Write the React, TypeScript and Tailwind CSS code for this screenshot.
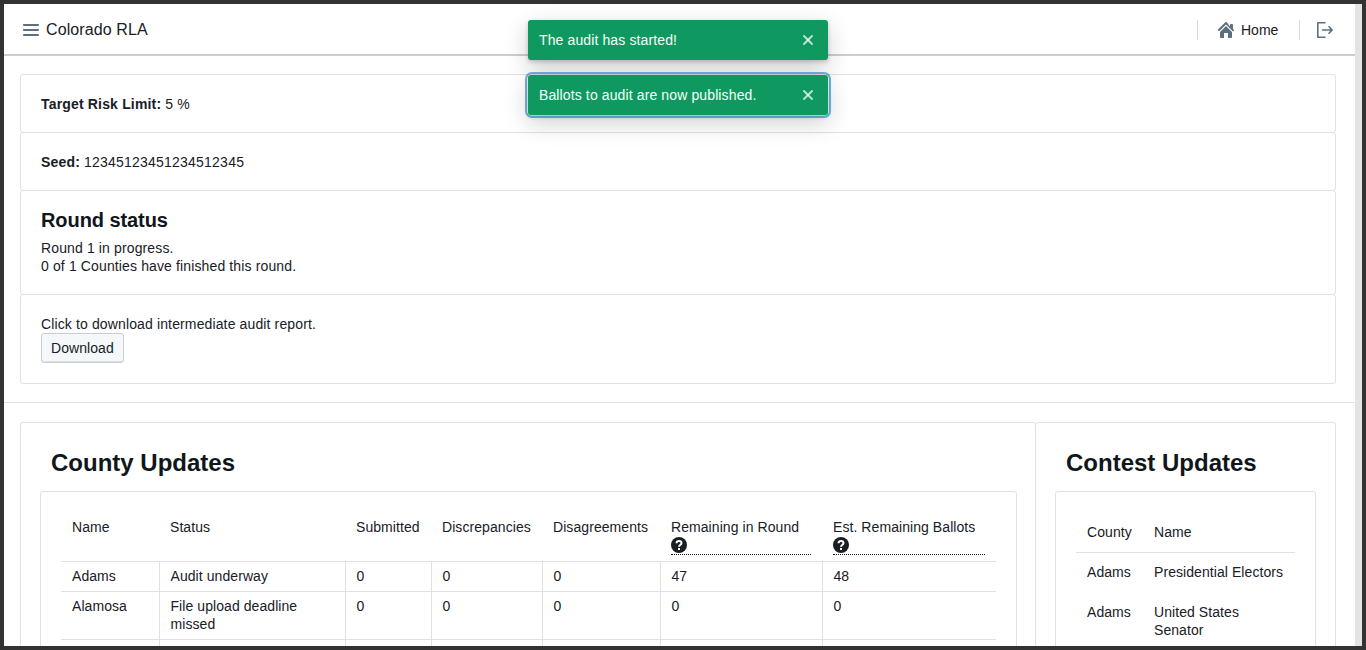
import { X } from 'lucide-react';

const counties = [
  ['Adams', 'Audit underway', '0', '0', '0', '47', '48'],
  ['Alamosa', 'File upload deadline missed', '0', '0', '0', '0', '0'],
  ['\u00a0', '', '', '', '', '', ''],
];

const contests = [
  ['Adams', 'Presidential Electors'],
  ['Adams', 'United States Senator'],
];

const MenuIcon = () => (
  <svg viewBox="0 0 16 16" className="h-4 w-4 fill-[#5c7080]">
    <path d="M1 4h14c.55 0 1-.45 1-1s-.45-1-1-1H1c-.55 0-1 .45-1 1s.45 1 1 1zm14 3H1c-.55 0-1 .45-1 1s.45 1 1 1h14c.55 0 1-.45 1-1s-.45-1-1-1zm0 5H1c-.55 0-1 .45-1 1s.45 1 1 1h14c.55 0 1-.45 1-1s-.45-1-1-1z" />
  </svg>
);

const HomeIcon = () => (
  <svg viewBox="0 0 16 16" className="h-4 w-4 fill-[#5c7080]">
    <path d="M2 10v5c0 .55.45 1 1 1h3v-5h4v5h3c.55 0 1-.45 1-1v-5L8 4 2 10zm13-2.41V3c0-.55-.45-1-1-1h-1c-.55 0-1 .45-1 1v1.59L8.71.3C8.53.11 8.28 0 8 0s-.53.11-.71.29l-7 7a1.003 1.003 0 001.42 1.42L8 2.41l6.29 6.29c.18.19.43.3.71.3a1.003 1.003 0 00.71-1.71L15 7.59z" />
  </svg>
);

const LogOutIcon = () => (
  <svg viewBox="0 0 20 20" className="h-4 w-4 fill-[#5c7080]">
    <path d="M19.71 9.29l-4-4a1.003 1.003 0 00-1.42 1.42L16.59 9H7c-.55 0-1 .45-1 1s.45 1 1 1h9.59l-2.29 2.29a1.003 1.003 0 001.42 1.42l4-4c.18-.18.29-.43.29-.71 0-.28-.11-.53-.29-.71zM10 18H2V2h8c.55 0 1-.45 1-1s-.45-1-1-1H1C.45 0 0 .45 0 1v18c0 .55.45 1 1 1h9c.55 0 1-.45 1-1s-.45-1-1-1z" />
  </svg>
);

const HelpIcon = () => (
  <svg viewBox="0 0 16 16" className="mt-px block h-4 w-4">
    <circle cx="8" cy="8" r="8" fill="#182026" />
    <path d="M5.5 6.2C5.6 4.8 6.6 4 8 4c1.5 0 2.5.9 2.5 2.1 0 1.9-2.5 1.9-2.5 3.6" fill="none" stroke="#fff" strokeWidth="2" />
    <rect x="7" y="11" width="2" height="2" fill="#fff" />
  </svg>
);

const Toast = ({ text, focused }: { text: string; focused?: boolean }) => (
  <div className={focused ? 'rounded-[4px] outline-2 outline-offset-1 outline-[rgba(19,124,189,0.6)]' : 'rounded-[3px]'}>
    <div className="flex h-10 w-[300px] items-center justify-between rounded-[3px] bg-[#0f9960] pl-[11px] pr-[12px] tracking-[0.12px] text-[#f5fffa] shadow-[0_2px_4px_rgba(16,22,26,0.2),0_8px_24px_rgba(16,22,26,0.2)]">
      <span>{text}</span>
      <X className="h-4 w-4 text-white/70" strokeWidth={3} />
    </div>
  </div>
);

const HeadLabel = ({ text }: { text: string }) => (
  <div className="border-b border-dotted border-[#182026] pb-[1px]">
    {text}
    <HelpIcon />
  </div>
);

const Card = ({ children, className }: { children: React.ReactNode; className: string }) => (
  <div className={`rounded-[3px] border border-[#dfe1e3] bg-white ${className}`}>{children}</div>
);

export default function App() {
  return (
    <div className="relative flex h-screen w-screen overflow-hidden border-4 border-[#333333] bg-white font-['Liberation_Sans',sans-serif] text-sm leading-[18px] text-[#182026]">
      <div className="min-w-0 flex-1">
        <nav className="flex h-[52px] items-center justify-between border-b-2 border-[#cbcdcf] pl-[19px] pr-[22px] pt-[2px]">
          <div className="flex items-center gap-[7px]">
            <MenuIcon />
            <span className="text-base tracking-[0.1px]">Colorado RLA</span>
          </div>
          <div className="flex items-center">
            <div className="h-5 w-px bg-[#d8dadc]" />
            <div className="flex w-[101px] items-center gap-[7px] pl-5">
              <HomeIcon />
              <span>Home</span>
            </div>
            <div className="h-5 w-px bg-[#d8dadc]" />
            <div className="ml-[17px]">
              <LogOutIcon />
            </div>
          </div>
        </nav>

        <section className="flex flex-col border-b border-[#dfe1e3] pb-[18px] pl-4 pr-[19px] pt-[18px] tracking-[0.13px]">
          <Card className="px-5 pb-[19px] pt-5">
            <strong className="tracking-[0.17px]">Target Risk Limit:</strong> 5 %
          </Card>
          <Card className="-mt-px px-5 pb-[19px] pt-5">
            <strong className="tracking-[0.17px]">Seed:</strong> <span className="tracking-[0.22px]">12345123451234512345</span>
          </Card>
          <Card className="-mt-px px-5 pb-[19px] pt-[17px]">
            <h4 className="mb-[7px] text-xl font-bold leading-[24px] tracking-[-0.08px] text-[#10161a]">Round status</h4>
            <div>Round 1 in progress.</div>
            <div>0 of 1 Counties have finished this round.</div>
          </Card>
          <Card className="-mt-px px-5 pb-5 pt-[20px]">
            <div>Click to download intermediate audit report.</div>
            <button className="h-[30px] rounded-[3px] border border-[#c9cdd0] bg-[#f5f8fa] px-[9px] tracking-[0.07px] shadow-[inset_0_-1px_0_rgba(16,22,26,0.1)]">
              Download
            </button>
          </Card>
        </section>

        <section className="flex pl-4 pr-[19px] pt-[19px]">
          <Card className="w-[1016px] shrink-0 pb-5 pl-[19px] pr-[18px] pt-[22px]">
            <h3 className="mb-[10px] pl-[11px] text-2xl font-bold leading-[36px] text-[#10161a]">County Updates</h3>
            <Card className="px-5 pb-8 pt-5 tracking-[0.07px]">
              <table className="w-[935px] table-fixed border-collapse">
                <thead>
                  <tr className="align-top">
                    <th className="w-[98px] px-[11px] py-[6px] text-left font-normal">Name</th>
                    <th className="w-[186px] px-[11px] py-[6px] text-left font-normal">Status</th>
                    <th className="w-[86px] px-[11px] py-[6px] text-left font-normal">Submitted</th>
                    <th className="w-[111px] px-[11px] py-[6px] text-left font-normal">Discrepancies</th>
                    <th className="w-[118px] px-[11px] py-[6px] text-left font-normal">Disagreements</th>
                    <th className="w-[162px] px-[11px] py-[6px] text-left font-normal">
                      <HeadLabel text="Remaining in Round" />
                    </th>
                    <th className="w-[174px] px-[11px] py-[6px] text-left font-normal">
                      <HeadLabel text="Est. Remaining Ballots" />
                    </th>
                  </tr>
                </thead>
                <tbody>
                  {counties.map((row, i) => (
                    <tr key={i} className="border-t border-[#dfe1e3] align-top">
                      {row.map((cell, j) => (
                        <td key={j} className={`px-[11px] pb-[6px] pt-[5px] ${j > 0 ? 'border-l border-[#dfe1e3]' : ''}`}>
                          {cell}
                        </td>
                      ))}
                    </tr>
                  ))}
                </tbody>
              </table>
            </Card>
          </Card>

          <Card className="-ml-px min-w-0 flex-1 px-[19px] pb-5 pt-[22px]">
            <h3 className="mb-[10px] pl-[11px] text-2xl font-bold leading-[36px] text-[#10161a]">Contest Updates</h3>
            <Card className="px-5 pb-8 pt-5 tracking-[0.07px]">
              <table className="w-full table-fixed border-collapse">
                <thead>
                  <tr className="border-b border-[#dfe1e3]">
                    <th className="w-[67px] px-[11px] py-[11px] text-left font-normal">County</th>
                    <th className="px-[11px] py-[11px] text-left font-normal">Name</th>
                  </tr>
                </thead>
                <tbody>
                  {contests.map((row, i) => (
                    <tr key={i} className="align-top">
                      <td className="px-[11px] pb-[12px] pt-[10px]">{row[0]}</td>
                      <td className="px-[11px] pb-[12px] pt-[10px]">{row[1]}</td>
                    </tr>
                  ))}
                </tbody>
              </table>
            </Card>
          </Card>
        </section>
      </div>

      <div className="w-[7px] shrink-0 bg-[#e4e4e4]" />

      <div className="absolute left-[524px] top-4 flex flex-col gap-[15px]">
        <Toast text="The audit has started!" />
        <Toast text="Ballots to audit are now published." focused />
      </div>
    </div>
  );
}
